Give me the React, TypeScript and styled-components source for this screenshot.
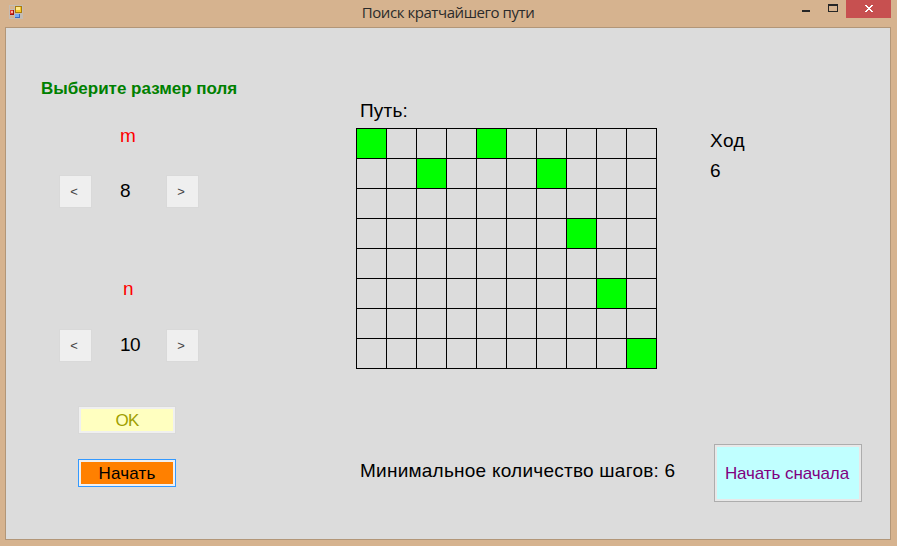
import React from "react";
import styled, { createGlobalStyle } from "styled-components";

const GlobalStyle = createGlobalStyle`
  * { box-sizing: border-box; }
  body { margin: 0; background: #d6b38f; font-family: "Liberation Sans", Arial, sans-serif; }
`;

const Window = styled.div`
  width: 897px;
  height: 546px;
  padding: 0 6px 6px 5px;
  background: #d6b38f;
  display: flex;
  flex-direction: column;
  overflow: hidden;
`;

const TitleBar = styled.header`
  height: 27px;
  flex: none;
  display: grid;
  grid-template-columns: 97px 1fr 97px;
  align-items: start;
`;

const AppIcon = styled.svg`
  display: block;
  margin: 5px 0 0 4px;
`;

const Title = styled.h1`
  margin: 0;
  font: 400 15px/24px "Open Sans", sans-serif;
  letter-spacing: -0.44px;
  text-align: center;
  color: #2b2b2b;
  white-space: nowrap;
`;

const Controls = styled.div`
  display: flex;
  justify-content: flex-end;
`;

const WindowButton = styled.button<{ $w: number; $close?: boolean }>`
  width: ${(p) => p.$w}px;
  height: 18px;
  padding: 0;
  border: 0;
  background: ${(p) => (p.$close ? "#c75050" : "transparent")};
  svg { display: block; }
`;

const Client = styled.main`
  flex: 1;
  border: 1px solid #b29678;
  background: #dcdcdc;
  display: grid;
  grid-template-columns: 350px 353px 1fr;
`;

const Sidebar = styled.section`
  display: flex;
  flex-direction: column;
`;

const Heading = styled.h2`
  margin: 51px 0 0 35px;
  font-size: 17px;
  line-height: 20px;
  letter-spacing: 0;
  color: #008000;
  white-space: nowrap;
`;

const SizeField = styled.div<{ $top: number }>`
  margin: ${(p) => p.$top}px 0 0 53px;
  width: 140px;
  display: flex;
  flex-direction: column;
`;

const Caption = styled.div<{ $indent: number; $gap: number }>`
  margin: 0 0 ${(p) => p.$gap}px ${(p) => p.$indent}px;
  font-size: 19px;
  line-height: 22px;
  color: #ff0000;
`;

const Stepper = styled.div`
  display: grid;
  grid-template-columns: 33px 1fr 33px;
  align-items: center;
`;

const StepButton = styled.button`
  height: 33px;
  padding: 0 3px 1px 0;
  border: 1px solid #d9d9d9;
  background: #efefef;
  color: #444;
  font: 13px "Liberation Sans", Arial, sans-serif;
`;

const Value = styled.span`
  padding: 0 0 1px 28px;
  font-size: 19px;
  line-height: 22px;
  letter-spacing: -0.6px;
`;

const ActionButton = styled.button<{
  $fill: string;
  $edge: string;
  $ink: string;
  $top: number;
  $track: number;
}>`
  width: 98px;
  height: 28px;
  margin: ${(p) => p.$top}px 0 0 72px;
  padding: 1px 0 0;
  border: 1px solid ${(p) => p.$edge};
  box-shadow: inset 0 0 0 2px #f0f0f0;
  background: ${(p) => p.$fill};
  color: ${(p) => p.$ink};
  font: 17px/20px "Liberation Sans", Arial, sans-serif;
  letter-spacing: ${(p) => p.$track}px;
`;

const Center = styled.section`
  display: flex;
  flex-direction: column;
  align-items: flex-start;
`;

const Label = styled.div<{ $top: number; $track?: number }>`
  margin: ${(p) => p.$top}px 0 0 4px;
  font-size: 19px;
  line-height: 22px;
  letter-spacing: ${(p) => p.$track ?? 0}px;
  color: #000;
  white-space: nowrap;
`;

const Board = styled.div`
  margin-top: 6px;
  padding: 1px;
  display: grid;
  grid-template-columns: repeat(10, 29px);
  grid-auto-rows: 29px;
  gap: 1px;
  background: #000;
`;

const Cell = styled.div<{ $visited: boolean }>`
  background: ${(p) => (p.$visited ? "#00ff00" : "#dcdcdc")};
`;

const Side = styled.section`
  display: flex;
  flex-direction: column;
  align-items: flex-start;
  padding-left: 1px;
`;

const Turn = styled.div<{ $top: number }>`
  margin-top: ${(p) => p.$top}px;
  font-size: 19px;
  line-height: 22px;
  letter-spacing: 0.5px;
`;

const RestartButton = styled.button`
  width: 148px;
  height: 58px;
  margin: 262px 0 0 4px;
  padding: 1px 2px 0 0;
  border: 1px solid #adadad;
  box-shadow: inset 0 0 0 2px #e8e8e8;
  background: #c0ffff;
  color: #800080;
  font: 17px/20px "Liberation Sans", Arial, sans-serif;
  letter-spacing: -0.08px;
  white-space: nowrap;
`;

const ROWS = 8;
const COLS = 10;
const path = new Set(["0,0", "1,2", "0,4", "1,6", "3,7", "5,8", "7,9"]);

type SizePickerProps = {
  name: string;
  value: number;
  top: number;
  indent: number;
  gap: number;
};

function SizePicker({ name, value, top, indent, gap }: SizePickerProps) {
  return (
    <SizeField $top={top}>
      <Caption $indent={indent} $gap={gap}>{name}</Caption>
      <Stepper>
        <StepButton>&lt;</StepButton>
        <Value>{value}</Value>
        <StepButton>&gt;</StepButton>
      </Stepper>
    </SizeField>
  );
}

export default function App() {
  return (
    <>
      <GlobalStyle />
      <Window>
        <TitleBar>
          <AppIcon width="14" height="14" viewBox="0 0 14 14" shapeRendering="crispEdges">
            <path fill="#c4bcb4" d="M0 0h14v14H0z" />
            <path fill="#d6b38f" d="M1 1h4v3H1zM1 11h4v2H1z" />
            <path fill="#9b1410" d="M1 5h4v5H1z" />
            <path fill="#e23a2e" d="M1 5h3v4H1z" />
            <path fill="#ffb0a0" d="M2 6h2v2H2z" />
            <path fill="#a87b10" d="M6 1h7v7H6z" />
            <path fill="#f8c823" d="M7 2h5v5H7z" />
            <path fill="#ffe98a" d="M7 2h4v3H7z" />
            <path fill="#3768bf" d="M6 9h5v4H6z" />
            <path fill="#78adf5" d="M6 9h4v3H6z" />
          </AppIcon>
          <Title>Поиск кратчайшего пути</Title>
          <Controls>
            <WindowButton $w={26} aria-label="Свернуть">
              <svg width="26" height="18" shapeRendering="crispEdges">
                <path fill="#262626" d="M8 10h8v2H8z" />
              </svg>
            </WindowButton>
            <WindowButton $w={26} aria-label="Развернуть">
              <svg width="26" height="18" shapeRendering="crispEdges">
                <path fill="#262626" fillRule="evenodd" d="M8 4h10v8H8zM9 6v5h8V6z" />
              </svg>
            </WindowButton>
            <WindowButton $w={45} $close aria-label="Закрыть">
              <svg width="45" height="18" shapeRendering="crispEdges">
                <path
                  fill="#fff"
                  d="M19 5h2v1h1v1h2v-1h1v-1h2v1h-1v1h-1v1h-1v1h1v1h1v1h1v1h-2v-1h-1v-1h-2v1h-1v1h-2v-1h1v-1h1v-1h1v-1h-1v-1h-1v-1h-1z"
                />
              </svg>
            </WindowButton>
          </Controls>
        </TitleBar>
        <Client>
          <Sidebar>
            <Heading>Выберите размер поля</Heading>
            <SizePicker name="m" value={8} top={26} indent={61} gap={28} />
            <SizePicker name="n" value={10} top={70} indent={64} gap={29} />
            <ActionButton $top={44} $fill="#ffffc0" $edge="#d9d9d9" $ink="#a0a000" $track={-0.9}>OK</ActionButton>
            <ActionButton $top={25} $fill="#ff8000" $edge="#3399ff" $ink="#000" $track={0.15}>Начать</ActionButton>
          </Sidebar>
          <Center>
            <Label $top={72} $track={0.2}>Путь:</Label>
            <Board>
              {Array.from({ length: ROWS * COLS }, (_, i) => (
                <Cell key={i} $visited={path.has(`${Math.floor(i / COLS)},${i % COLS}`)} />
              ))}
            </Board>
            <Label $top={91} $track={0.24}>Минимальное количество шагов: 6</Label>
          </Center>
          <Side>
            <Turn $top={102}>Ход</Turn>
            <Turn $top={8}>6</Turn>
            <RestartButton>Начать сначала</RestartButton>
          </Side>
        </Client>
      </Window>
    </>
  );
}
